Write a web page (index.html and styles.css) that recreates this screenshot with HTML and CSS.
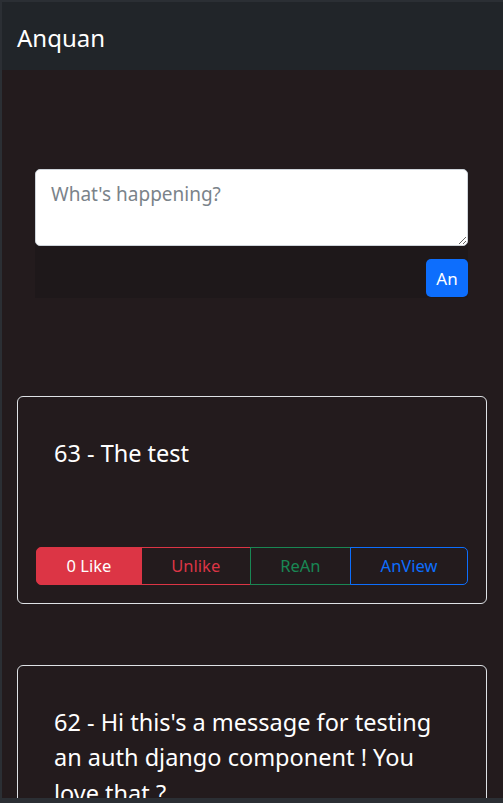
FILE: index.html
```html
<!DOCTYPE html>
<html lang="en">
<head>
<meta charset="utf-8">
<title>Anquan</title>
<link rel="stylesheet" href="styles.css">
</head>
<body>
<nav class="navbar"><span class="brand">Anquan</span></nav>
<main class="container">
  <form class="composer">
    <textarea class="composer-input" placeholder="What's happening?"></textarea>
    <div class="composer-actions"><button type="button" class="btn-primary">An</button></div>
  </form>
  <section class="feed">
    <article class="post">
      <p class="post-text">63 - The test</p>
      <div class="btn-group">
        <button type="button" class="btn btn-like">0 Like</button>
        <button type="button" class="btn btn-unlike">Unlike</button>
        <button type="button" class="btn btn-rean">ReAn</button>
        <button type="button" class="btn btn-view">AnView</button>
      </div>
    </article>
    <article class="post">
      <p class="post-text">62 - Hi this's a message for testing an auth django component ! You love that ?</p>
      <div class="btn-group">
        <button type="button" class="btn btn-like">0 Like</button>
        <button type="button" class="btn btn-unlike">Unlike</button>
        <button type="button" class="btn btn-rean">ReAn</button>
        <button type="button" class="btn btn-view">AnView</button>
      </div>
    </article>
  </section>
</main>
<div class="bottom-strip"></div>
</body>
</html>
```
FILE: styles.css
```css
* { box-sizing: border-box; }
html { background: #231b1d; }
body {
  margin: 0;
  background: #231b1d;
  border-top: 2px solid #2b2f34;
  border-left: 2px solid #2b2f34;
  font-family: "Noto Sans", "Open Sans", sans-serif;
  color: #fff;
  min-height: 803px;
}
.navbar {
  height: 68px;
  background: #212529;
  display: flex;
  align-items: center;
  padding: 4px 0 0 15px;
}
.brand {
  font-size: 24px;
  color: #fff;
  line-height: 1;
}
.container {
  padding: 99px 16px 0 15px;
}
.composer {
  margin: 0 19px 0 18px;
  background: #1e181a;
  padding-bottom: 1px;
}
.composer-input {
  display: block;
  width: 100%;
  height: 77px;
  border: 1px solid #ced4da;
  border-radius: 5px;
  background: #fff;
  font-family: inherit;
  font-size: 19px;
  padding: 11px 15px;
  resize: vertical;
}
.composer-input::placeholder { color: #7b838a; }
.composer-actions {
  display: flex;
  justify-content: flex-end;
  padding-top: 13px;
}
.btn-primary {
  background: #0d6efd;
  color: #fff;
  border: 0;
  border-radius: 5px;
  height: 38px;
  width: 42px;
  font-family: inherit;
  font-size: 17px;
  padding: 0;
}
.feed {
  display: flex;
  flex-direction: column;
  gap: 61px;
  margin-top: 98px;
}
.post {
  border: 1px solid #dee2e6;
  border-radius: 6px;
  padding: 39px 18px 18px;
}
.post-text {
  margin: 0 0 75px;
  padding: 0 36px 0 18px;
  font-size: 23.5px;
  line-height: 35.5px;
}
.btn-group {
  display: flex;
}
.btn {
  flex: 1 1 auto;
  height: 38px;
  background: transparent;
  border: 1px solid;
  font-family: inherit;
  font-size: 16.5px;
  padding: 0 10px;
  margin-left: -1px;
}
.btn:first-child { margin-left: 0; border-radius: 5px 0 0 5px; }
.btn:last-child { border-radius: 0 5px 5px 0; }
.btn-like { background: #dc3545; border-color: #dc3545; color: #fff; }
.btn-unlike { border-color: #dc3545; color: #dc3545; }
.btn-rean { border-color: #198754; color: #198754; }
.btn-view { border-color: #0d6efd; color: #0d6efd; }
.bottom-strip {
  position: fixed;
  left: 0;
  right: 0;
  bottom: 0;
  height: 5px;
  background: #2b2f34;
}
```
